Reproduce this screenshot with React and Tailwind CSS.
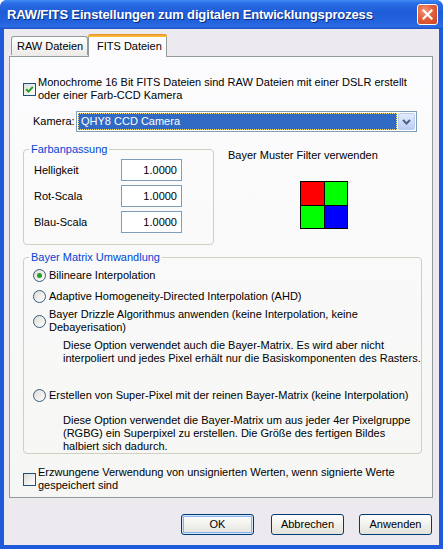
import React from "react";

const F = "[font-family:'Liberation_Sans',Arial,sans-serif]";

function CheckBox({ checked }) {
  return (
    <div className="w-[13px] h-[13px] shrink-0 border border-[#1C5180] bg-gradient-to-br from-[#DCDCD7] to-[#FFFFFF] flex items-center justify-center">
      {checked && (
        <svg width="9" height="9" viewBox="0 0 9 9">
          <path d="M1.2 4.2 L3.5 6.6 L7.8 1.8" stroke="#21A121" strokeWidth="2" fill="none" />
        </svg>
      )}
    </div>
  );
}

function Radio({ checked }) {
  return (
    <div className="w-[13px] h-[13px] shrink-0 rounded-full border border-[#3C5A7A] bg-gradient-to-br from-[#DCDCD7] to-white flex items-center justify-center">
      {checked && <div className="w-[5px] h-[5px] rounded-full bg-[#21A121]" />}
    </div>
  );
}

function NumBox() {
  return (
    <div className="w-[61px] h-[22px] border border-[#7F9DB9] bg-white flex items-center justify-end pr-[4px]">
      1.0000
    </div>
  );
}

function Btn({ children, def }) {
  return (
    <div
      className={
        def
          ? "w-[73px] h-[21px] rounded-[3px] border border-[#003C74] bg-gradient-to-b from-white to-[#E3E3DB] flex items-center justify-center shadow-[inset_0_0_0_1px_#CEE7FF,inset_0_0_0_2px_#8CB0EA]"
          : "w-[73px] h-[21px] rounded-[3px] border border-[#003C74] bg-gradient-to-b from-white to-[#E3E3DB] flex items-center justify-center"
      }
    >
      {children}
    </div>
  );
}

export default function App() {
  return (
    <div className={`w-[443px] h-[549px] flex flex-col bg-[#1F5ADB] rounded-t-[7px] overflow-hidden text-[11px] leading-[13px] text-black ${F}`}>
      {/* Title bar */}
      <div className="h-[29px] shrink-0 flex items-center justify-between pl-[7px] pr-[5px] bg-[linear-gradient(to_bottom,#3F8CF3_0%,#2A6DE6_12%,#1F5DD8_40%,#2262DC_75%,#2D6BE2_92%,#1A4FC6_100%)]">
        <span className="text-white font-bold text-[13px] leading-[16px] tracking-[-0.15px] [text-shadow:1px_1px_0_#0A2A80]">
          RAW/FITS Einstellungen zum digitalen Entwicklungsprozess
        </span>
        <div className="w-[21px] h-[21px] rounded-[3px] border border-white bg-[radial-gradient(circle_at_35%_30%,#F29A7C_0%,#E3603C_45%,#C8421F_100%)] flex items-center justify-center">
          <svg width="11" height="11" viewBox="0 0 11 11">
            <path d="M1.5 1.5 L9.5 9.5 M9.5 1.5 L1.5 9.5" stroke="white" strokeWidth="2.2" strokeLinecap="square" />
          </svg>
        </div>
      </div>

      {/* Body */}
      <div className="flex-1 mx-[4px] mb-[4px] bg-[#ECEAEF] flex flex-col">
        {/* Tabs */}
        <div className="h-[27px] pt-[5px] ml-[7px] flex items-end">
          <div className="w-[77px] h-[19px] mb-[1px] border border-b-0 border-[#919B9C] rounded-t-[3px] bg-gradient-to-b from-white to-[#ECEBE6] flex items-center pl-[5px]">
            RAW Dateien
          </div>
          <div className="relative z-10 -mb-[1px] w-[79px] h-[23px] border-x border-[#919B9C] rounded-t-[3px] bg-[#FCFCFE] flex flex-col">
            <div className="h-[3px] rounded-t-[3px] bg-gradient-to-b from-[#E68B2C] to-[#FFC73C] -mx-[1px]" />
            <div className="flex-1 flex items-center pl-[8px] pb-[2px]">FITS Dateien</div>
          </div>
        </div>

        {/* Panel */}
        <div className="ml-[5px] mr-[6px] h-[442px] border border-[#919B9C] bg-gradient-to-b from-[#FCFCFE] to-[#F6F6F4] flex flex-col pl-[13px]">
          <div className="mt-[19px] flex items-center gap-[2px]">
            <CheckBox checked />
            <div className="whitespace-nowrap">
              Monochrome 16 Bit FITS Dateien sind RAW Dateien mit einer DSLR erstellt
              <br />
              oder einer Farb-CCD Kamera
            </div>
          </div>

          <div className="mt-[9px] flex items-center pl-[10px]">
            <div className="w-[43px]">Kamera:</div>
            <div className="w-[341px] h-[21px] border border-[#7F9DB9] bg-white flex items-center pl-[1px] pr-[1px]">
              <div className="flex-1 h-[17px] bg-[#316AC5] border border-dotted border-[#FFE27A] text-white flex items-center pl-[2px]">
                QHY8 CCD Camera
              </div>
              <div className="ml-[1px] w-[17px] h-[17px] rounded-[2px] border border-[#B9CCF4] bg-gradient-to-b from-[#E4EDFD] to-[#B8CCF6] flex items-center justify-center">
                <svg width="9" height="6" viewBox="0 0 9 6">
                  <path d="M1 1 L4.5 4.5 L8 1" stroke="#4D6185" strokeWidth="2" fill="none" />
                </svg>
              </div>
            </div>
          </div>

          <div className="mt-[11px] flex items-start">
            <fieldset className="w-[191px] border border-[#D0D0BF] rounded-[4px] pl-[10px] pt-[3px] pb-[11px] flex flex-col gap-[4px]">
              <legend className="ml-[-5px] px-[2px] text-[#0046D5]">Farbanpassung</legend>
              <div className="flex items-center">
                <div className="w-[87px]">Helligkeit</div>
                <NumBox />
              </div>
              <div className="flex items-center">
                <div className="w-[87px]">Rot-Scala</div>
                <NumBox />
              </div>
              <div className="flex items-center">
                <div className="w-[87px]">Blau-Scala</div>
                <NumBox />
              </div>
            </fieldset>
            <div className="ml-[14px] mt-[6px] flex flex-col">
              <div>Bayer Muster Filter verwenden</div>
              <div className="mt-[19px] ml-[72px] w-[48px] grid grid-cols-[23px_22px] grid-rows-[23px_22px] gap-[1px] bg-black border border-black">
                <div className="bg-[#FF0000]" />
                <div className="bg-[#00FF00]" />
                <div className="bg-[#00FF00]" />
                <div className="bg-[#0000FF]" />
              </div>
            </div>
          </div>

          <fieldset className="mt-[6px] w-[395px] border border-[#D0D0BF] rounded-[4px] pl-[9px] pt-[5px] flex flex-col whitespace-nowrap">
            <legend className="ml-[-4px] px-[2px] text-[#0046D5]">Bayer Matrix Umwandlung</legend>
            <div className="flex items-center gap-[3px]">
              <Radio checked />
              <div>Bilineare Interpolation</div>
            </div>
            <div className="mt-[8px] flex items-center gap-[3px]">
              <Radio />
              <div>Adaptive Homogeneity-Directed Interpolation (AHD)</div>
            </div>
            <div className="mt-[5px] flex items-center gap-[3px]">
              <Radio />
              <div>
                Bayer Drizzle Algorithmus anwenden (keine Interpolation, keine
                <br />
                Debayerisation)
              </div>
            </div>
            <div className="mt-[5px] pl-[30px]">
              Diese Option verwendet auch die Bayer-Matrix. Es wird aber nicht
              <br />
              interpoliert und jedes Pixel erhält nur die Basiskomponenten des Rasters.
            </div>
            <div className="mt-[24px] flex items-center gap-[3px]">
              <Radio />
              <div>Erstellen von Super-Pixel mit der reinen Bayer-Matrix (keine Interpolation)</div>
            </div>
            <div className="mt-[12px] pl-[30px]">
              Diese Option verwendet die Bayer-Matrix um aus jeder 4er Pixelgruppe
              <br />
              (RGBG) ein Superpixel zu erstellen. Die Größe des fertigen Bildes
              <br />
              halbiert sich dadurch.
            </div>
          </fieldset>

          <div className="mt-[12px] flex items-center gap-[2px]">
            <CheckBox />
            <div className="whitespace-nowrap">
              Erzwungene Verwendung von unsignierten Werten, wenn signierte Werte
              <br />
              gespeichert sind
            </div>
          </div>
        </div>

        {/* Buttons */}
        <div className="mt-[16px] flex justify-end pr-[7px]">
          <Btn def>OK</Btn>
          <div className="ml-[17px]">
            <Btn>Abbrechen</Btn>
          </div>
          <div className="ml-[15px]">
            <Btn>Anwenden</Btn>
          </div>
        </div>
      </div>
    </div>
  );
}
